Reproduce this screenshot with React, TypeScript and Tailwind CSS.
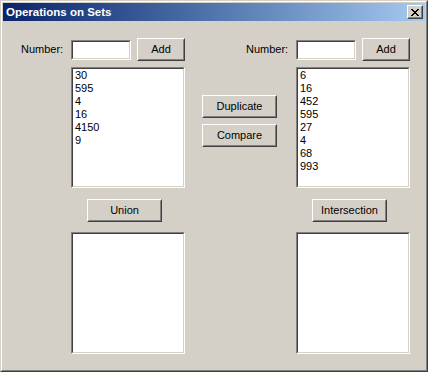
import React from "react";

const font = { fontFamily: '"Liberation Sans", Arial, sans-serif' };

function Raised({ w, h, children }: { w: string; h: string; children: React.ReactNode }) {
  return (
    <div className={`${w} ${h} border border-t-white border-l-white border-r-[#404040] border-b-[#404040] bg-[#D4D0C8]`}>
      <div className="w-full h-full border border-t-[#D4D0C8] border-l-[#D4D0C8] border-r-[#808080] border-b-[#808080] flex items-center justify-center text-[11px] text-black">
        {children}
      </div>
    </div>
  );
}

function Sunken({ w, h, children }: { w: string; h: string; children?: React.ReactNode }) {
  return (
    <div className={`${w} ${h} border border-t-[#808080] border-l-[#808080] border-r-white border-b-white`}>
      <div className="w-full h-full border border-t-[#404040] border-l-[#404040] border-r-[#D4D0C8] border-b-[#D4D0C8] bg-white">
        {children}
      </div>
    </div>
  );
}

function ListBox({ items }: { items: string[] }) {
  return (
    <Sunken w="w-[114px]" h="h-[121px]">
      <div className="flex flex-col pl-[2px] pt-[0px] text-[11px] leading-[13px] text-black">
        {items.map((it, i) => (
          <div key={i}>{it}</div>
        ))}
      </div>
    </Sunken>
  );
}

function NumberRow() {
  return (
    <div className="flex items-center">
      <div className="w-[50px] text-[11px] text-black">Number:</div>
      <Sunken w="w-[60px]" h="h-[20px]" />
      <div className="ml-[6px]">
        <Raised w="w-[48px]" h="h-[23px]">Add</Raised>
      </div>
    </div>
  );
}

export default function App() {
  return (
    <div style={font} className="w-[428px] h-[372px] bg-[#D4D0C8] border border-t-[#D4D0C8] border-l-[#D4D0C8] border-r-[#404040] border-b-[#404040]">
      <div className="w-full h-full border border-t-white border-l-white border-r-[#808080] border-b-[#808080] p-[1px] flex flex-col">
        <div className="h-[18px] bg-linear-to-r from-[#0A246A] to-[#A6CAF0] flex items-center justify-between">
          <span className="pl-[3px] text-white font-bold text-[11.5px] leading-[18px]">Operations on Sets</span>
          <div className="mr-[2px]">
            <div className="w-[16px] h-[14px] border border-t-white border-l-white border-r-[#404040] border-b-[#404040] bg-[#D4D0C8]">
              <div className="w-full h-full border border-t-[#D4D0C8] border-l-[#D4D0C8] border-r-[#808080] border-b-[#808080] flex items-center justify-center">
                <svg width="8" height="7" viewBox="0 0 8 7" shapeRendering="crispEdges">
                  <path d="M0 0h2v1h-2zM6 0h2v1h-2zM1 1h2v1h-2zM5 1h2v1h-2zM2 2h4v1h-4zM3 3h2v1h-2zM2 4h4v1h-4zM1 5h2v1h-2zM5 5h2v1h-2zM0 6h2v1h-2zM6 6h2v1h-2z" fill="#000" />
                </svg>
              </div>
            </div>
          </div>
        </div>

        <div className="flex flex-col pl-[18px]">
          <div className="flex mt-[17px]">
            <NumberRow />
            <div className="ml-[61px]">
              <NumberRow />
            </div>
          </div>

          <div className="flex mt-[6px]">
            <div className="ml-[50px]">
              <ListBox items={["30", "595", "4", "16", "4150", "9"]} />
            </div>
            <div className="ml-[17px] mt-[28px] flex flex-col gap-[6px]">
              <Raised w="w-[75px]" h="h-[23px]">Duplicate</Raised>
              <Raised w="w-[75px]" h="h-[23px]">Compare</Raised>
            </div>
            <div className="ml-[19px]">
              <ListBox items={["6", "16", "452", "595", "27", "4", "68", "993"]} />
            </div>
          </div>

          <div className="flex mt-[11px]">
            <div className="ml-[66px]">
              <Raised w="w-[75px]" h="h-[23px]">Union</Raised>
            </div>
            <div className="ml-[150px]">
              <Raised w="w-[75px]" h="h-[23px]">Intersection</Raised>
            </div>
          </div>

          <div className="flex mt-[10px]">
            <div className="ml-[50px]">
              <Sunken w="w-[114px]" h="h-[122px]" />
            </div>
            <div className="ml-[111px]">
              <Sunken w="w-[114px]" h="h-[122px]" />
            </div>
          </div>
        </div>
      </div>
    </div>
  );
}
